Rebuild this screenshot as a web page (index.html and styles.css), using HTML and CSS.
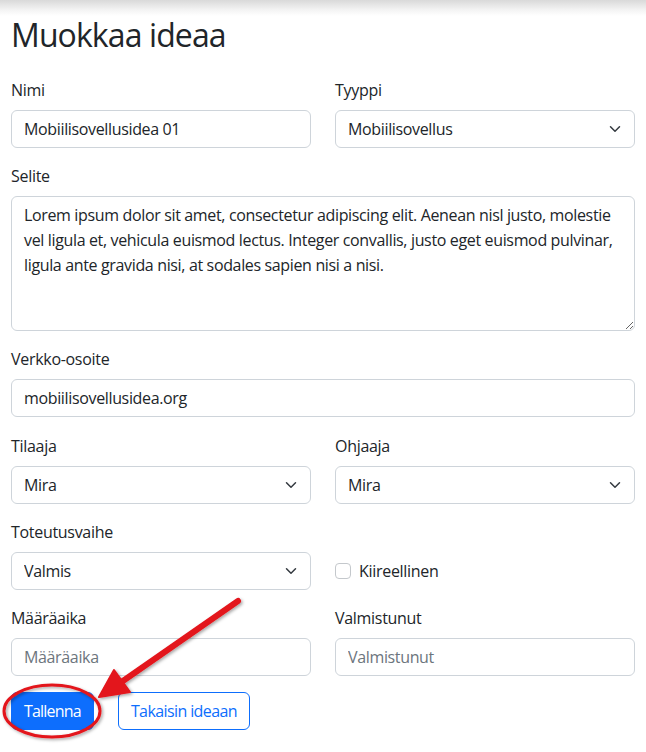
FILE: index.html
```html
<!DOCTYPE html>
<html lang="fi">
<head>
<meta charset="utf-8">
<title>Muokkaa ideaa</title>
<link rel="stylesheet" href="styles.css">
</head>
<body>
<div class="topshade"></div>
<main class="page">
  <h1 class="title">Muokkaa ideaa</h1>
  <form class="form">
    <div class="grid">
      <div class="field">
        <label class="label">Nimi</label>
        <input class="control" type="text" value="Mobiilisovellusidea 01">
      </div>
      <div class="field">
        <label class="label">Tyyppi</label>
        <div class="select-wrap">
          <select class="control select"><option>Mobiilisovellus</option></select>
          <svg class="chev" viewBox="0 0 16 16" width="16" height="12"><path fill="none" stroke="#343a40" stroke-linecap="round" stroke-linejoin="round" stroke-width="2" d="m2 5 6 6 6-6"/></svg>
        </div>
      </div>
      <div class="field span2">
        <label class="label">Selite</label>
        <textarea class="control area">Lorem ipsum dolor sit amet, consectetur adipiscing elit. Aenean nisl justo, molestie vel ligula et, vehicula euismod lectus. Integer convallis, justo eget euismod pulvinar, ligula ante gravida nisi, at sodales sapien nisi a nisi.</textarea>
      </div>
      <div class="field span2 url-field">
        <label class="label">Verkko-osoite</label>
        <input class="control" type="text" value="mobiilisovellusidea.org">
      </div>
      <div class="field">
        <label class="label">Tilaaja</label>
        <div class="select-wrap">
          <select class="control select"><option>Mira</option></select>
          <svg class="chev" viewBox="0 0 16 16" width="16" height="12"><path fill="none" stroke="#343a40" stroke-linecap="round" stroke-linejoin="round" stroke-width="2" d="m2 5 6 6 6-6"/></svg>
        </div>
      </div>
      <div class="field">
        <label class="label">Ohjaaja</label>
        <div class="select-wrap">
          <select class="control select"><option>Mira</option></select>
          <svg class="chev" viewBox="0 0 16 16" width="16" height="12"><path fill="none" stroke="#343a40" stroke-linecap="round" stroke-linejoin="round" stroke-width="2" d="m2 5 6 6 6-6"/></svg>
        </div>
      </div>
      <div class="field">
        <label class="label">Toteutusvaihe</label>
        <div class="select-wrap">
          <select class="control select"><option>Valmis</option></select>
          <svg class="chev" viewBox="0 0 16 16" width="16" height="12"><path fill="none" stroke="#343a40" stroke-linecap="round" stroke-linejoin="round" stroke-width="2" d="m2 5 6 6 6-6"/></svg>
        </div>
      </div>
      <div class="field check-field">
        <input class="check" type="checkbox" id="kiire">
        <label class="check-label" for="kiire">Kiireellinen</label>
      </div>
      <div class="field">
        <label class="label">Määräaika</label>
        <input class="control" type="text" placeholder="Määräaika">
      </div>
      <div class="field">
        <label class="label">Valmistunut</label>
        <input class="control" type="text" placeholder="Valmistunut">
      </div>
    </div>
    <div class="actions">
      <button class="btn btn-primary" type="button">Tallenna</button>
      <button class="btn btn-outline" type="button">Takaisin ideaan</button>
    </div>
  </form>
</main>
<svg class="annot" viewBox="0 0 646 752" width="646" height="752">
  <defs>
    <filter id="sh" x="-20%" y="-20%" width="140%" height="140%">
      <feDropShadow dx="1.5" dy="1.5" stdDeviation="1.5" flood-color="#000" flood-opacity="0.35"/>
    </filter>
  </defs>
  <g filter="url(#sh)">
    <ellipse cx="52" cy="711" rx="48" ry="26" fill="none" stroke="#e3141b" stroke-width="3"/>
    <line x1="238" y1="601" x2="120" y2="683" stroke="#e3141b" stroke-width="6" stroke-linecap="round"/>
    <polygon points="99,697 114,670 130,692" fill="#e3141b" stroke="#e3141b" stroke-width="2" stroke-linejoin="round"/>
  </g>
</svg>
</body>
</html>
```

FILE: styles.css
```css
* { box-sizing: border-box; }
html, body { margin: 0; padding: 0; }
body {
  position: relative;
  width: 646px;
  min-height: 752px;
  background: #fff;
  color: #212529;
  font-family: "Open Sans", "Noto Sans", sans-serif;
  font-size: 16px;
  line-height: 24px;
  overflow: hidden;
}
.topshade {
  height: 16px;
  background: linear-gradient(to bottom, #d9d9d9 0%, #f3f3f3 60%, #ffffff 100%);
}
.page {
  padding: 0 11px;
}
.title {
  margin: 0 0 24px;
  font-size: 32px;
  line-height: 38px;
  font-weight: 400;
  letter-spacing: -0.9px;
}
.grid {
  display: grid;
  grid-template-columns: 1fr 1fr;
  column-gap: 24px;
  row-gap: 16px;
}
.span2 { grid-column: 1 / -1; }
.field { display: flex; flex-direction: column; min-width: 0; }
.url-field { margin-bottom: 1px; }
.label {
  display: block;
  margin-bottom: 8px;
  line-height: 24px;
  letter-spacing: -0.3px;
}
.control {
  display: block;
  width: 100%;
  height: 38px;
  padding: 6px 12px;
  font: inherit;
  font-size: 16px;
  line-height: 24px;
  color: #212529;
  background: #fff;
  border: 1px solid #ced4da;
  border-radius: 6px;
  letter-spacing: -0.35px;
  outline: none;
  margin: 0;
}
.control::placeholder { color: #6c757d; opacity: 1; }
.area {
  height: 135px;
  line-height: 25px;
  resize: vertical;
}
.select-wrap { position: relative; }
.select {
  appearance: none;
  -webkit-appearance: none;
  padding-right: 36px;
}
.chev {
  position: absolute;
  right: 12px;
  top: 13px;
  pointer-events: none;
}
.check-field {
  flex-direction: row;
  align-items: center;
  align-self: end;
  height: 38px;
}
.check {
  appearance: none;
  -webkit-appearance: none;
  width: 16px;
  height: 16px;
  margin: 0 8px 0 0;
  border: 1px solid #c4c8cc;
  border-radius: 4px;
  background: #fff;
  flex: none;
}
.check-label { letter-spacing: -0.3px; }
.actions {
  display: flex;
  gap: 24px;
  margin-top: 16px;
}
.btn {
  font: inherit;
  font-size: 16px;
  line-height: 24px;
  padding: 6px 12px;
  border-radius: 6px;
  border: 1px solid #0d6efd;
  letter-spacing: -0.6px;
  cursor: pointer;
}
.btn-primary { background: #0d6efd; color: #fff; letter-spacing: -0.8px; }
.btn-outline { background: #fff; color: #0d6efd; }
.annot {
  position: absolute;
  left: 0;
  top: 0;
  pointer-events: none;
}
```
